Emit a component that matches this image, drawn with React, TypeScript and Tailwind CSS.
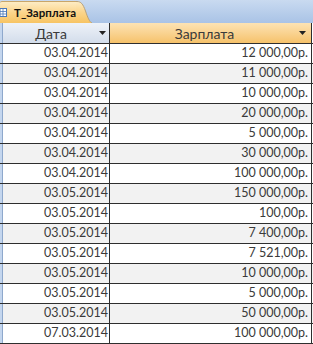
import React from "react";

const rows: [string, string][] = [
  ["03.04.2014", "12 000,00р."],
  ["03.04.2014", "11 000,00р."],
  ["03.04.2014", "10 000,00р."],
  ["03.04.2014", "20 000,00р."],
  ["03.04.2014", "5 000,00р."],
  ["03.04.2014", "30 000,00р."],
  ["03.04.2014", "100 000,00р."],
  ["03.05.2014", "150 000,00р."],
  ["03.05.2014", "100,00р."],
  ["03.05.2014", "7 400,00р."],
  ["03.05.2014", "7 521,00р."],
  ["03.05.2014", "10 000,00р."],
  ["03.05.2014", "5 000,00р."],
  ["03.05.2014", "50 000,00р."],
  ["07.03.2014", "100 000,00р."],
];

function Arrow() {
  return (
    <svg width="7" height="4" viewBox="0 0 7 4" className="shrink-0">
      <path d="M0 0 H7 L3.5 4 Z" fill="#222" />
    </svg>
  );
}

export default function App() {
  return (
    <div className="w-[313px] h-[344px] overflow-hidden bg-white font-['Lato',sans-serif] text-[#3a3a3a]">
      {/* Tab strip */}
      <div className="h-[23px] flex items-end bg-gradient-to-b from-[#c9daf0] to-[#a9c3e6]">
        <div className="h-[22px] flex items-center gap-[7px] bg-gradient-to-b from-[#fdecc4] via-[#fbd58b] to-[#f7c463] border-t border-[#c9a66a] rounded-tl-[2px]">
          <svg width="7" height="9" viewBox="0 0 7 9" className="shrink-0">
            <rect x="0" y="0.5" width="6.5" height="8" fill="#fff" stroke="#4a78b8" />
            <path d="M0 3.5 H7 M0 6 H7 M3 1 V9" stroke="#4a78b8" strokeWidth="0.8" />
          </svg>
          <span className="font-bold text-[11.5px] text-[#111] leading-none">Т_Зарплата</span>
        </div>
        <svg width="16" height="22" viewBox="0 0 16 22" className="shrink-0">
          <defs>
            <linearGradient id="tabg" x1="0" y1="0" x2="0" y2="1">
              <stop offset="0" stopColor="#fdecc4" />
              <stop offset="0.5" stopColor="#fbd58b" />
              <stop offset="1" stopColor="#f7c463" />
            </linearGradient>
          </defs>
          <path d="M0 0.5 H1 C5 0.5 7 3 9.5 10 C11.5 16 13.5 21 16 22 H0 Z" fill="url(#tabg)" />
          <path d="M0 0.5 H1 C5 0.5 7 3 9.5 10 C11.5 16 13.5 21 16 22" fill="none" stroke="#b8a27c" strokeWidth="1" />
        </svg>
      </div>

      {/* Header */}
      <div className="flex h-[21px] border-b border-[#2e2e2e] text-[14px]">
        <div className="w-[2px] bg-[#c4d6ee]" />
        <div className="w-[108px] flex items-center pr-[3px] border-l border-[#8ea8cc] border-r border-r-[#2e2e2e] bg-gradient-to-b from-[#eef2f8] to-[#d3ddeb]">
          <span className="flex-1 text-center">Дата</span>
          <Arrow />
        </div>
        <div className="w-[202px] flex items-center pr-[5px] border-r border-[#2e2e2e] bg-gradient-to-b from-[#fce3b4] to-[#f6c26a]">
          <span className="flex-1 text-center">Зарплата</span>
          <Arrow />
        </div>
      </div>

      {/* Rows */}
      {rows.map(([d, s], i) => (
        <div
          key={i}
          className={`flex h-[20px] border-b border-[#2e2e2e] text-[12.5px] ${i % 2 ? "bg-[#f2f2f2]" : "bg-white"}`}
        >
          <div className="w-[2px] bg-[#c4d6ee]" />
          <div className="w-[108px] flex items-center justify-end pr-[1px] border-l border-[#8ea8cc] border-r border-r-[#2e2e2e]">
            {d}
          </div>
          <div className="w-[202px] flex items-center justify-end pr-[3px] border-r border-[#2e2e2e]">{s}</div>
        </div>
      ))}
      <div className="flex h-[10px]">
        <div className="w-[2px] bg-[#c4d6ee]" />
        <div className="w-[108px] border-l border-[#8ea8cc] border-r border-r-[#2e2e2e]" />
        <div className="w-[202px] bg-[#fce6c2] border-r border-[#2e2e2e]" />
      </div>
    </div>
  );
}
